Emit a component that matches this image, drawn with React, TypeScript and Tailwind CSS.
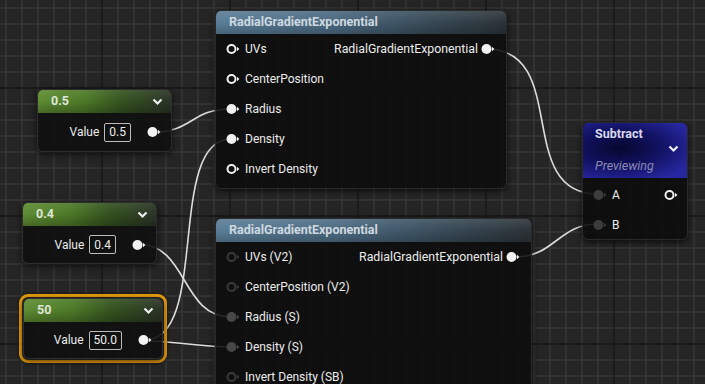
import React from 'react';

const font = { fontFamily: 'Roboto, "Open Sans", sans-serif' };

type PinProps = { filled?: boolean; color?: string };

const Pin: React.FC<PinProps> = ({ filled, color = '#f2f2f2' }) => (
  <svg width="14" height="12" viewBox="0 0 14 12" className="shrink-0">
    {filled ? (
      <circle cx="5.5" cy="6" r="5" fill={color} />
    ) : (
      <circle cx="5.5" cy="6" r="4" fill="none" stroke={color} strokeWidth="2" />
    )}
    <path d="M11 3.8 L13.4 6 L11 8.2 Z" fill={color} />
  </svg>
);

const Chevron: React.FC = () => (
  <svg width="11" height="8" viewBox="0 0 11 8">
    <polyline points="1.5,1.5 5.5,5.5 9.5,1.5" fill="none" stroke="#f0f0f0" strokeWidth="2.2" />
  </svg>
);

type Row = { label: string; filled?: boolean; color?: string };

const InputRow: React.FC<Row> = ({ label, filled, color }) => (
  <div className="flex h-[30px] items-center gap-[5px] pl-[10px]">
    <Pin filled={filled} color={color} />
    <span className="text-[12px] text-[#ececec] whitespace-nowrap">{label}</span>
  </div>
);

const ConstNode: React.FC<{ title: string; value: string; className?: string }> = ({ title, value, className }) => (
  <div className={`flex flex-col overflow-hidden rounded-[6px] border border-[#2e2e2e] bg-[rgba(14,16,14,0.9)] shadow-[0_2px_6px_rgba(0,0,0,0.7)] ${className ?? ''}`}>
    <div className="flex h-[23px] items-center justify-between pl-[13px] pr-[8px] bg-[linear-gradient(to_bottom,rgba(255,255,255,0.08),rgba(0,0,0,0)_45%,rgba(0,0,0,0.25)),linear-gradient(to_right,#5f8d33_0%,#4d7a28_35%,#34521f_65%,#2b3427_100%)]">
      <span className="text-[12.5px] font-bold text-[#dfe6d8]">{title}</span>
      <Chevron />
    </div>
    <div className="flex flex-1 items-center justify-end pr-[10px]">
      <span className="text-[12px] text-[#ececec]">Value</span>
      <span className="ml-[5px] flex h-[19px] items-center rounded-[2px] border border-[#bdbdbd] px-[4px] text-[12px] text-[#ececec]">{value}</span>
      <span className="ml-[16px] flex">
        <Pin filled />
      </span>
    </div>
  </div>
);

const RadialNode: React.FC<{ rows: Row[]; className?: string }> = ({ rows, className }) => (
  <div className={`flex flex-col overflow-hidden rounded-[6px] border border-[#2a2a2a] bg-[rgba(12,12,12,0.88)] shadow-[0_2px_6px_rgba(0,0,0,0.7)] ${className ?? ''}`}>
    <div className="flex h-[23px] shrink-0 items-center pl-[13px] bg-[linear-gradient(to_bottom,rgba(255,255,255,0.1),rgba(0,0,0,0)_50%,rgba(0,0,0,0.2)),linear-gradient(to_right,#5a7d97_0%,#4b6981_40%,#34444f_80%,#2c3338_100%)]">
      <span className="text-[12.5px] font-bold text-[#cfd8df]">RadialGradientExponential</span>
    </div>
    <div className="flex justify-between pb-[4px]">
      <div className="flex flex-col">
        {rows.map((r) => (
          <InputRow key={r.label} {...r} />
        ))}
      </div>
      <div className="flex h-[30px] items-center gap-[3px] pr-[11px]">
        <span className="text-[12.3px] text-[#ececec]">RadialGradientExponential</span>
        <Pin filled />
      </div>
    </div>
  </div>
);

const wires = [
  { from: [153, 132], to: [231, 109], k: 40 },
  { from: [145, 340], to: [231, 139], k: 65 },
  { from: [145, 341], to: [231, 347], k: 30 },
  { from: [138, 244], to: [231, 317], k: 50 },
  { from: [486, 49], to: [598, 194], k: 85 },
  { from: [515, 257], to: [598, 224], k: 40 },
];

export default function App() {
  return (
    <div
      style={font}
      className="relative h-[384px] w-[705px] overflow-hidden bg-[#252525] bg-[linear-gradient(to_right,#1a1a1a_2px,transparent_2px),linear-gradient(to_bottom,#1a1a1a_2px,transparent_2px),linear-gradient(to_right,#323232_2px,transparent_2px),linear-gradient(to_bottom,#323232_2px,transparent_2px)] bg-size-[128px_128px,128px_128px,16px_16px,16px_16px] bg-position-[101px_87px,101px_87px,5px_7px,5px_7px]"
    >
      <svg className="absolute inset-0" width="705" height="384">
        {wires.map((w, i) => (
          <path
            key={i}
            d={`M${w.from[0]} ${w.from[1]} C${w.from[0] + w.k} ${w.from[1]} ${w.to[0] - w.k} ${w.to[1]} ${w.to[0]} ${w.to[1]}`}
            fill="none"
            stroke="#dcdcdc"
            strokeWidth="1.6"
          />
        ))}
      </svg>

      <RadialNode
        className="absolute left-[215px] top-[10px] w-[292px]"
        rows={[
          { label: 'UVs' },
          { label: 'CenterPosition' },
          { label: 'Radius', filled: true },
          { label: 'Density', filled: true },
          { label: 'Invert Density' },
        ]}
      />

      <RadialNode
        className="absolute left-[215px] top-[218px] w-[317px]"
        rows={[
          { label: 'UVs (V2)', color: '#3a3a3a' },
          { label: 'CenterPosition (V2)', color: '#3a3a3a' },
          { label: 'Radius (S)', filled: true, color: '#474747' },
          { label: 'Density (S)', filled: true, color: '#474747' },
          { label: 'Invert Density (SB)', color: '#3a3a3a' },
        ]}
      />

      <div className="absolute left-[582px] top-[122px] flex h-[118px] w-[106px] flex-col overflow-hidden rounded-[6px] border border-[#2a2a2a] bg-[rgba(12,12,12,0.9)] shadow-[0_2px_6px_rgba(0,0,0,0.7)]">
        <div className="h-[55px] shrink-0 pl-[12px] bg-[radial-gradient(ellipse_75%_65%_at_35%_45%,#07072f_0%,#111160_50%,#2727a0_100%)]">
          <div className="pt-[2px] text-[12.5px] font-bold leading-[17px] text-[#d8d8ec]">Subtract</div>
          <div className="flex h-[10px] items-center justify-end pr-[8px] pt-[3px]">
            <Chevron />
          </div>
          <div className="pt-[5px] text-[12.5px] italic leading-[17px] text-[#8a8ab0]">Previewing</div>
        </div>
        <div className="flex justify-between pt-[2px]">
          <div className="flex flex-col">
            <InputRow label="A" filled color="#3c3c3c" />
            <InputRow label="B" filled color="#3c3c3c" />
          </div>
          <div className="flex h-[30px] items-center pr-[9px]">
            <Pin />
          </div>
        </div>
      </div>

      <ConstNode title="0.5" value="0.5" className="absolute left-[37px] top-[89px] h-[63px] w-[135px]" />
      <ConstNode title="0.4" value="0.4" className="absolute left-[22px] top-[202px] h-[62px] w-[135px]" />

      <div className="absolute left-[19px] top-[294px] rounded-[9px] border-[3px] border-[#e59b0c] p-[1px] shadow-[0_0_3px_rgba(0,0,0,0.6)]">
        <ConstNode title="50" value="50.0" className="h-[61px] w-[140px]" />
      </div>
    </div>
  );
}
